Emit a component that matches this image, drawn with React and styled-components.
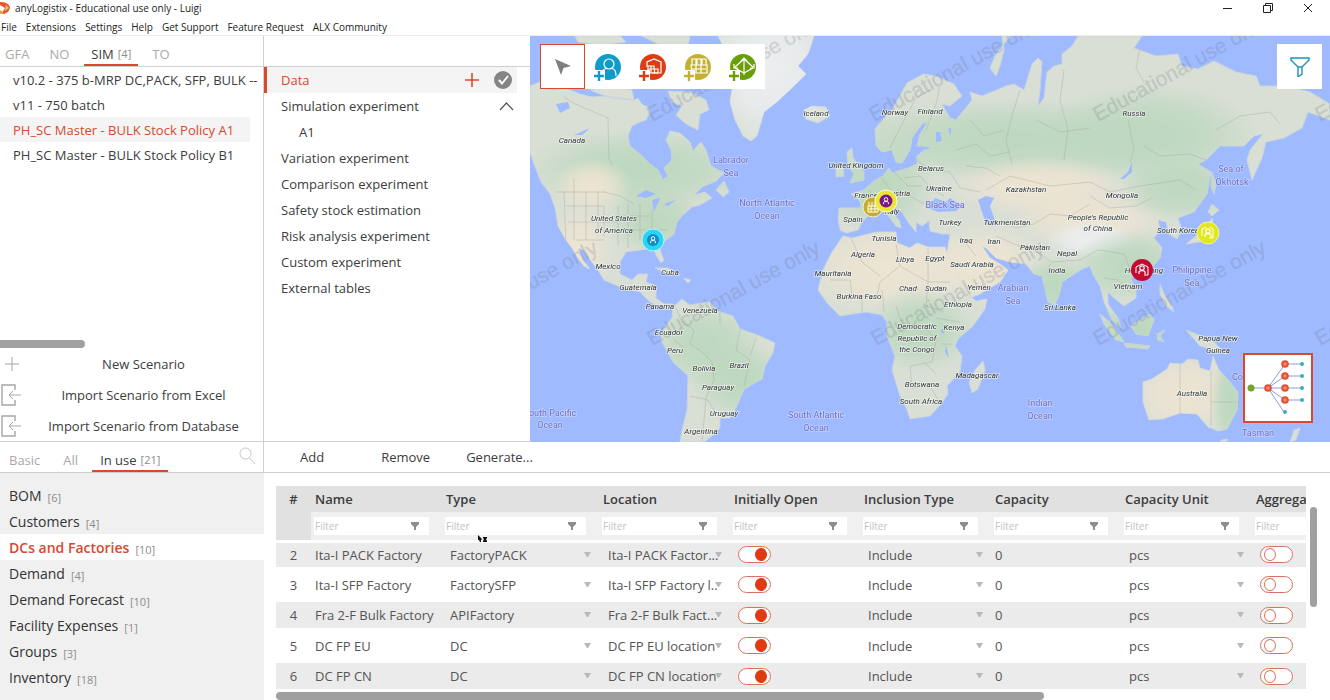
import React from "react";
import styled, { createGlobalStyle } from "styled-components";

const GlobalStyle = createGlobalStyle`
  :root {
    --accent: #d9482f;
    --text: #3c3c3c;
    --muted: #a9a9a9;
    --line: #cfcfcf;
    --panel: #f0f0f0;
    --thumb: #a0a0a0;
  }
  * {
    box-sizing: border-box;
  }
  body {
    margin: 0;
    background: #fff;
    color: var(--text);
    font-family: "Open Sans", "Noto Sans", sans-serif;
    font-size: 13px;
  }
  button,
  input,
  select {
    font: inherit;
    color: inherit;
    border: 0;
    padding: 0;
    margin: 0;
    background: none;
  }
`;

const Page = styled.div`
  display: flex;
  flex-direction: column;
  height: 100vh;
  overflow: hidden;
`;

const TitleBar = styled.header`
  display: flex;
  align-items: center;
  flex: 0 0 16px;
  gap: 5px;
  padding-right: 2px;
  font-size: 10px;
`;

const TitleText = styled.h1`
  flex: 1;
  margin: 0;
  font-size: 10px;
  font-weight: 400;
  color: #222;
`;

const WindowButtons = styled.div`
  display: flex;
`;

const WindowButton = styled.button`
  display: flex;
  align-items: center;
  justify-content: center;
  width: 40px;
  height: 16px;
`;

const MenuBar = styled.nav`
  display: flex;
  align-items: center;
  flex: 0 0 20px;
  gap: 9px;
  padding: 2px 0 0 1px;
  border-bottom: 1px solid #ececec;
`;

const MenuItem = styled.button`
  font-size: 10px;
  color: #222;
`;

const Workspace = styled.main`
  display: grid;
  grid-template-columns: 264px 266px 1fr;
  flex: 1;
  min-height: 0;
`;

const SidePanel = styled.section`
  display: flex;
  flex-direction: column;
  min-width: 0;
  border-right: ${(props) => (props.$divided ? "1px solid var(--line)" : "0")};
  border-bottom: 1px solid var(--line);
`;

const Tabs = styled.div`
  display: flex;
  align-items: stretch;
  flex: 0 0 31px;
  border-bottom: 1px solid var(--line);
`;

const Tab = styled.button`
  display: flex;
  align-items: center;
  gap: 4px;
  padding: 7px ${(props) => props.$pad}px 0;
  color: ${(props) => (props.$active ? "var(--text)" : "var(--muted)")};
  border-bottom: 2px solid
    ${(props) => (props.$active ? "var(--accent)" : "transparent")};
`;

const Count = styled.span`
  font-size: 11px;
  color: #8c8c8c;
`;

const ScenarioList = styled.ul`
  flex: 1;
  margin: 0;
  padding: 0;
  list-style: none;
`;

const Scenario = styled.li`
  height: 25px;
  margin-right: 13px;
  padding-left: 13px;
  line-height: 26px;
  white-space: nowrap;
  color: ${(props) => (props.$selected ? "var(--accent)" : "inherit")};
  background: ${(props) => (props.$selected ? "#f4f4f4" : "none")};
`;

const ListThumb = styled.div`
  width: 85px;
  height: 8px;
  border-radius: 0 4px 4px 0;
  background: var(--thumb);
`;

const ImportButton = styled.button`
  display: grid;
  grid-template-columns: 24px 1fr;
  align-items: center;
  height: 31px;
`;

const Experiment = styled.div`
  display: flex;
  align-items: center;
  height: 26px;
  margin-right: 13px;
  padding-left: ${(props) => (props.$nested ? 35 : props.$selected ? 14 : 17)}px;
  padding-right: ${(props) => (props.$selected ? 5 : 3)}px;
  color: ${(props) => (props.$selected ? "var(--accent)" : "inherit")};
  background: ${(props) => (props.$selected ? "#f4f4f4" : "none")};
  border-left: ${(props) => (props.$selected ? "3px solid var(--accent)" : "0")};
`;

const ExperimentName = styled.span`
  flex: 1;
`;

const IconButton = styled.button`
  display: flex;
  margin-left: 14px;
`;

const MapPane = styled.section`
  position: relative;
  overflow: hidden;
  background: #9fbafe;
`;

const MapSvg = styled.svg`
  display: block;
  width: 100%;
  height: 100%;
`;

const MapTools = styled.div`
  position: absolute;
  top: 8px;
  left: 10px;
  display: flex;
  background: #fff;
`;

const MapTool = styled.button`
  display: flex;
  align-items: center;
  justify-content: center;
  width: 45px;
  height: 45px;
  background: #fff;
  border: 1px solid ${(props) => (props.$active ? "var(--accent)" : "#fff")};
`;

const MapFilter = styled(MapTool)`
  position: absolute;
  top: 8px;
  right: 8px;
`;

const MiniMap = styled.button`
  position: absolute;
  right: 17px;
  bottom: 19px;
  width: 70px;
  height: 70px;
  background: #fff;
  border: 2px solid var(--accent);
`;

const Bottom = styled.div`
  display: grid;
  grid-template-columns: 264px 1fr;
  flex: 0 0 257px;
`;

const TablesPane = styled.section`
  display: flex;
  flex-direction: column;
  min-height: 0;
  overflow: hidden;
`;

const TabSpacer = styled.div`
  flex: 1;
  display: flex;
  justify-content: flex-end;
  padding: 5px 7px 0 0;
  border-right: 1px solid var(--line);
`;

const TableNames = styled.ul`
  flex: 1;
  margin: 0;
  padding: 9px 0 0;
  list-style: none;
  background: var(--panel);
`;

const TableName = styled.li`
  display: flex;
  align-items: center;
  gap: 6px;
  height: 26px;
  padding-left: 9px;
  font-size: 14px;
  font-weight: ${(props) => (props.$selected ? 600 : 400)};
  color: ${(props) => (props.$selected ? "var(--accent)" : "#333")};
  background: ${(props) => (props.$selected ? "#fff" : "none")};

  ${Count} {
    padding-top: 4px;
    font-weight: 400;
  }
`;

const DataPane = styled.section`
  position: relative;
  display: flex;
  flex-direction: column;
  min-width: 0;
`;

const Actions = styled.div`
  display: flex;
  align-items: center;
  flex: 0 0 31px;
  padding-left: 36px;
  border-bottom: 1px solid var(--line);
`;

const Action = styled.button`
  margin-right: ${(props) => props.$gap || 0}px;
`;

const GridArea = styled.div`
  display: grid;
  grid-template-columns: 1fr 7px;
  gap: 4px;
  margin: 13px 13px 0 12px;
  min-width: 0;
`;

const GridClip = styled.div`
  min-width: 0;
  overflow: hidden;
`;

const VerticalThumb = styled.div`
  height: 100px;
  margin-top: 21px;
  border-radius: 4px;
  background: var(--thumb);
`;

const HorizontalThumb = styled.div`
  width: 72%;
  height: 8px;
  margin: 3px 0 0 12px;
  border-radius: 4px;
  background: var(--thumb);
`;

const Table = styled.table`
  width: 1106px;
  table-layout: fixed;
  border-collapse: collapse;
`;

const HeadCell = styled.th`
  height: 26px;
  padding: 0 0 0 ${(props) => (props.$number ? 0 : 4)}px;
  font-weight: 600;
  text-align: ${(props) => (props.$number ? "center" : "left")};
  background: #e1e1e1;
`;

const FilterCell = styled.td`
  height: 29px;
  padding: 0 13px 0 3px;
  background: ${(props) => (props.$number ? "#e1e1e1" : "#f0f0f0")};
  border-bottom: 3px solid #fff;
`;

const FilterBox = styled.label`
  display: flex;
  align-items: center;
  height: 18px;
  padding-right: 9px;
  background: #fff;
`;

const FilterInput = styled.input`
  flex: 1;
  width: 0;
  min-width: 0;
  padding-left: 1px;
  font-size: 10px;

  &::placeholder {
    color: #c2c2c2;
    opacity: 1;
  }
`;

const Row = styled.tr`
  height: ${(props) => (props.$shaded ? 26 : 35)}px;
  background: ${(props) => (props.$shaded ? "#ebebeb" : "#fff")};
`;

const Cell = styled.td`
  padding: 0 0 0 ${(props) => (props.$number ? 0 : props.$pad || 4)}px;
  white-space: nowrap;
  color: #555;
  text-align: ${(props) => (props.$number ? "center" : "left")};
`;

const SelectBox = styled.div`
  display: flex;
  align-items: center;
  padding-right: 7px;

  svg {
    flex: none;
    margin-left: -6px;
  }
`;

const Select = styled.select`
  flex: 1;
  min-width: 0;
  padding-left: 1px;
  appearance: none;
`;

const Toggle = styled.input`
  appearance: none;
  display: flex;
  align-items: center;
  justify-content: flex-start;
  width: 33px;
  height: 17px;
  padding: 0 3px;
  border: 1px solid #dd705c;
  border-radius: 9px;
  background: #fff;

  &::before {
    content: "";
    width: 10px;
    height: 11px;
    border: 1px solid #dd705c;
    border-radius: 50%;
  }
  &:checked {
    justify-content: flex-end;
  }
  &:checked::before {
    border-color: #e03a12;
    background: #e03a12;
  }
`;

const BusyCursor = styled.svg`
  position: absolute;
  left: 213px;
  top: 93px;
`;

const scenarios = [
  "v10.2 - 375 b-MRP DC,PACK, SFP, BULK --",
  "v11 - 750 batch",
  "PH_SC Master - BULK Stock Policy A1",
  "PH_SC Master - BULK Stock Policy B1",
];

const experiments = [
  "Variation experiment",
  "Comparison experiment",
  "Safety stock estimation",
  "Risk analysis experiment",
  "Custom experiment",
  "External tables",
];

const tables = [
  ["BOM", 6],
  ["Customers", 4],
  ["DCs and Factories", 10],
  ["Demand", 4],
  ["Demand Forecast", 10],
  ["Facility Expenses", 1],
  ["Groups", 3],
  ["Inventory", 18],
];

const columns = [
  ["Name", 131],
  ["Type", 157],
  ["Location", 131],
  ["Initially Open", 130],
  ["Inclusion Type", 131],
  ["Capacity", 130],
  ["Capacity Unit", 131],
  ["Aggregate", 130],
];

const rows = [
  [2, "Ita-I PACK Factory", "FactoryPACK", "Ita-I PACK Factor..."],
  [3, "Ita-I SFP Factory", "FactorySFP", "Ita-I SFP Factory l.."],
  [4, "Fra 2-F Bulk Factory", "APIFactory", "Fra 2-F Bulk Fact..."],
  [5, "DC FP EU", "DC", "DC FP EU location"],
  [6, "DC FP CN", "DC", "DC FP CN location"],
];

// map coordinates: x 530-1330, y 36-442
const land = [
  // north america
  "M530 86L540 82 552 90 566 88 580 94 592 97 606 96 620 98 634 100 644 96 648 90 652 96 646 104 650 112 646 120 640 122 632 126 628 136 630 146 642 156 650 164 658 170 663 180 668 176 664 168 672 160 671 150 666 140 670 131 680 133 690 142 693 151 701 142 706 150 711 166 724 173 716 181 702 187 694 195 705 192 712 198 700 205 692 207 682 216 677 222 674 234 662 243 660 250 664 260 661 263 656 255 654 248 640 250 626 252 620 262 620 274 632 280 638 274 648 274 646 282 656 286 656 298 664 304 672 304 673 309 664 308 650 302 640 292 620 287 604 280 598 270 592 262 584 250 578 248 584 262 590 269 584 266 578 258 572 248 566 240 558 226 555 208 550 194 541 182 534 164 530 152Z",
  // islands of the arctic, baffin
  "M575 36L620 36 626 42 600 45 578 42Z",
  "M642 36L690 36 688 46 662 46Z",
  "M668 91L690 92 706 100 709 110 700 114 698 130 686 124 676 115 682 106 672 102Z",
  "M590 90L612 86 632 90 634 100 610 98Z",
  // greenland
  "M718 36L814 36 808 54 798 66 806 74 796 84 778 101 764 112 757 136 751 141 743 136 735 120 730 102 732 89 742 85 735 60 724 48Z",
  "M804 110L812 106 826 107 830 116 818 123 806 119Z",
  "M716 190L724 181 729 192 723 197Z",
  "M655 268L668 268 680 275 670 274Z",
  "M683 278L691 280 688 283Z",
  // south america
  "M673 307L682 299 690 305 710 302 717 311 733 316 740 329 760 336 775 343 773 353 765 366 762 379 744 389 737 406 730 418 720 418 720 428 712 436 704 442 680 442 682 430 687 410 688 376 673 362 661 340 663 330 672 318Z",
  // africa
  "M843 236L852 238 876 232 896 232 897 243 910 248 917 243 928 247 945 247 948 256 957 272 963 285 972 298 976 301 987 299 985 309 973 326 958 339 955 346 962 356 960 372 947 386 948 394 941 404 930 416 910 419 907 410 900 396 892 370 895 356 887 336 887 322 882 315 866 312 840 316 827 303 818 290 823 270 832 252Z",
  "M983 361L985 370 978 389 972 393 969 382 975 370Z",
  // europe and asia
  "M839 208L861 208 860 201 851 194 864 190 874 181 883 176 889 168 892 173 908 168 917 164 917 156 924 150 934 148 924 146 917 146 920 134 928 122 922 124 912 138 910 150 902 163 896 162 892 150 882 152 876 146 875 129 893 108 907 83 923 74 936 76 954 84 962 96 950 106 942 104 950 118 956 120 964 110 972 100 970 92 982 96 1006 86 1014 84 1024 90 1032 64 1038 58 1042 62 1040 90 1038 106 1044 98 1047 72 1054 66 1062 64 1062 54 1072 46 1078 36 1142 36 1134 48 1156 56 1178 54 1182 66 1198 69 1214 61 1236 72 1256 76 1260 86 1286 86 1310 92 1330 104 1330 120 1308 112 1302 128 1284 138 1266 142 1262 158 1252 180 1247 160 1250 150 1263 134 1254 136 1244 146 1220 146 1206 160 1198 164 1211 172 1207 194 1194 212 1178 218 1182 230 1177 239 1169 234 1166 222 1158 220 1160 230 1154 238 1162 248 1160 258 1150 270 1138 276 1130 278 1136 288 1136 298 1124 306 1114 298 1108 292 1108 304 1118 318 1121 328 1112 320 1104 302 1100 286 1094 276 1090 266 1082 269 1062 282 1060 292 1055 305 1048 302 1042 276 1034 274 1026 264 1010 262 996 258 986 248 982 246 990 258 1000 264 1008 270 1000 282 980 294 970 298 962 286 953 266 947 254 950 234 942 234 930 231 929 221 922 226 916 222 916 232 908 222 902 212 895 207 890 210 899 220 901 228 896 226 884 210 870 214 862 222 858 230 846 233 840 230 838 218Z",
  "M847 152L852 148 853 158 864 172 864 180 850 183 854 174 848 166Z",
  "M836 168L843 166 844 176 836 177Z",
  "M1010 36L995 56 990 68 996 76 1000 66 1004 50 1002 36Z",
  "M1212 172L1216 184 1214 194 1211 186Z",
  "M1208 212L1212 204 1219 210 1212 216ZM1212 218L1214 234 1200 242 1186 244 1196 236 1206 228Z",
  "M1100 314L1112 324 1124 342 1116 340 1104 324Z",
  "M1124 343L1150 346 1148 349 1126 347Z",
  "M1131 326L1150 314 1154 320 1148 336 1136 334Z",
  "M1157 334L1165 330 1160 336 1164 342 1158 340Z",
  "M1160 284L1164 294 1172 306 1174 312 1166 306 1160 294Z",
  "M1186 330L1196 334 1212 340 1226 354 1214 350 1200 346Z",
  // australia, new zealand
  "M1143 382L1152 379 1167 369 1170 363 1182 364 1188 359 1198 360 1200 368 1210 371 1213 356 1219 370 1230 382 1238 393 1237 410 1227 429 1218 431 1208 427 1197 414 1180 413 1163 419 1149 420 1143 402Z",
  "M1294 430L1300 428 1296 440 1290 442Z",
  "M1222 440L1228 439 1226 442 1220 442Z",
].join("");

const water = [
  "M928 208L935 198 946 202 950 198 962 206 956 211 938 212Z",
  "M978 200L986 196 994 198 990 206 994 218 996 226 986 224 982 212Z",
  "M1120 179L1128 172 1132 162 1132 172 1124 179Z",
  "M636 196L646 190 656 194 646 198ZM652 200L660 198 654 212ZM664 204L676 200 668 206Z",
  "M556 104L568 102 570 108 560 113ZM574 135L590 128 582 135Z",
  "M634 92L650 86 660 98 654 110 642 104Z",
  "M936 132L940 132 942 141 936 142ZM948 129L951 128 951 136Z",
  "M940 331L945 328 944 334ZM946 345L949 358 945 352Z",
];

const tints = [
  ["green", 640, 170, 120, 42],
  ["green", 655, 220, 50, 34],
  ["sand", 592, 186, 40, 28],
  ["sand", 580, 250, 34, 44],
  ["green", 706, 345, 56, 42],
  ["green", 740, 380, 50, 40],
  ["snow", 770, 70, 70, 80],
  ["sand", 890, 268, 90, 48],
  ["green", 920, 330, 56, 44],
  ["sand", 985, 264, 60, 40],
  ["green", 880, 186, 56, 50],
  ["green", 1010, 140, 190, 42],
  ["green", 1150, 135, 110, 52],
  ["sand", 1040, 186, 90, 30],
  ["sand", 1090, 220, 80, 28],
  ["snow", 1090, 240, 46, 20],
  ["green", 1130, 266, 60, 36],
  ["green", 1180, 188, 60, 34],
  ["green", 1054, 286, 40, 30],
  ["green", 1140, 330, 60, 30],
  ["sand", 1186, 394, 58, 40],
  ["green", 1230, 400, 20, 50],
];

const borders = [
  "M564 96Q566 100 580 106L608 118 609 158 612 165M556 192H606M564 192L566 246M574 178V240M586 192V240M598 192V232M604 192L620 196 634 204M566 206H604M568 222H618M576 240H604M604 206V236M618 206V246M628 204V248M640 204V240M652 210V240M618 216H650M620 230H668",
  "M676 308L682 322 694 330 690 344 700 350 712 362 714 380 706 398 702 442M720 312V324M740 330L736 350 750 360 744 386M756 338L750 356M690 396L708 400 716 414M674 340L684 348",
  "M850 236L862 262 880 276M896 244L900 266 880 282 876 300M928 248V282L950 282M900 266L928 282 926 306 944 312M830 280L850 280 852 296M862 296L862 312M882 290L884 312M896 306L904 330 924 326 936 340 932 362 910 366M936 318L960 322M942 344L952 344M910 366L912 388 930 386 938 400M924 362L936 374",
  "M868 190L878 200 886 204M882 178L892 192 902 190M892 170L908 186 922 186M904 178L920 176 930 188 944 196M910 196L924 204M916 160L930 170 950 172 960 188 980 192M890 148L900 128 916 98 930 90M926 130L936 104 940 86",
  "M986 190L1010 176 1050 186 1090 182 1110 192 1140 186 1180 180 1196 190M1000 220L1016 228 1034 224 1050 214 1070 216 1090 204M1090 196L1110 208 1136 206 1152 198M996 236L1014 244 1034 250 1052 262 1080 260 1098 250 1124 254 1132 274M960 236L976 256M1104 278L1118 280 1130 292M1050 264L1048 274 1062 272",
  "M1020 90L1012 116 1006 140 1012 164M1064 70L1060 100 1068 130 1064 160M1140 48L1136 68 1144 82M1128 120L1134 150 1130 162M1206 160L1190 154 1160 156 1144 146M1216 130L1240 116 1270 112 1280 124M970 120L984 136 1004 130M956 150L976 144 990 156 1010 152M966 166L986 168 1000 176M1036 120L1060 132 1090 128",
  "M1180 364V413M1211 371V426M1211 402H1238",
];

const places = [
  [816, 116, "Iceland"], [895, 115, "Norway"], [930, 114, "Finland"],
  [1134, 116, "Russia"], [572, 143, "Canada"], [856, 168, "United Kingdom"],
  [931, 171, "Belarus"], [939, 191, "Ukraine"], [1026, 192, "Kazakhstan"],
  [1122, 198, "Mongolia"], [866, 198, "France"], [898, 196, "Austria"],
  [614, 221, "United States"], [614, 233, "of America"], [853, 222, "Spain"],
  [892, 214, "Italy"], [950, 225, "Turkey"], [1007, 225, "Turkmenistan"],
  [1098, 220, "People's Republic"], [1098, 231, "of China"],
  [1178, 233, "South Korea"], [884, 241, "Tunisia"], [966, 243, "Iraq"],
  [994, 244, "Iran"], [1035, 250, "Pakistan"], [1067, 256, "Nepal"],
  [863, 257, "Algeria"], [905, 262, "Libya"], [935, 261, "Egypt"],
  [972, 267, "Saudi Arabia"], [608, 269, "Mexico"], [670, 275, "Cuba"],
  [1057, 273, "India"], [1144, 273, "Hong Kong"], [833, 276, "Mauritania"],
  [638, 290, "Guatemala"], [908, 291, "Chad"], [936, 291, "Sudan"],
  [979, 290, "Yemen"], [1128, 289, "Vietnam"], [859, 299, "Burkina Faso"],
  [958, 307, "Ethiopia"], [660, 309, "Panama"], [700, 313, "Venezuela"],
  [1060, 310, "Sri Lanka"], [917, 329, "Democratic"], [954, 330, "Kenya"],
  [917, 341, "Republic of"], [917, 352, "the Congo"], [669, 335, "Ecuador"],
  [675, 353, "Peru"], [1218, 341, "Papua New"], [1218, 353, "Guinea"],
  [704, 371, "Bolivia"], [739, 368, "Brazil"], [977, 378, "Madagascar"],
  [922, 387, "Botswana"], [718, 390, "Paraguay"], [921, 404, "South Africa"],
  [1192, 396, "Australia"], [724, 416, "Uruguay"], [701, 434, "Argentina"],
];

const seas = [
  [731, 163, "Labrador"], [731, 176, "Sea"], [767, 206, "North Atlantic"],
  [767, 219, "Ocean"], [945, 208, "Black Sea"], [1231, 172, "Sea of"],
  [1232, 185, "Okhotsk"], [1013, 291, "Arabian"], [1013, 304, "Sea"],
  [1192, 273, "Philippine"], [1192, 286, "Sea"], [550, 416, "South Pacific"],
  [550, 428, "Ocean"], [816, 418, "South Atlantic"], [816, 431, "Ocean"],
  [1040, 406, "Indian"], [1040, 419, "Ocean"], [1251, 380, "Coral Sea"],
  [1258, 436, "Tasman"],
];

const watermarks = [
  [652, 122], [874, 122], [1098, 122], [1320, 122],
  [430, 346], [652, 346], [876, 346], [1098, 346], [1320, 346],
];

const PersonGlyph = () => (
  <g fill="none" stroke="#fff" strokeWidth="1.2">
    <circle cx="0" cy="-2" r="2.2" />
    <path d="M-3 4V2Q-3 .6 0 .6T3 2V4" />
  </g>
);

const WorldMap = () => (
  <MapSvg
    viewBox="530 36 800 406"
    preserveAspectRatio="xMidYMid slice"
    role="img"
    aria-label="World map"
  >
    <defs>
      <clipPath id="land">
        <path d={land} />
      </clipPath>
      {[
        ["green", "#bcd8be"],
        ["sand", "#eee4d2"],
        ["snow", "#eceef1"],
      ].map(([id, color]) => (
        <radialGradient id={id} key={id}>
          <stop offset="0" stopColor={color} />
          <stop offset="0.5" stopColor={color} stopOpacity="0.75" />
          <stop offset="1" stopColor={color} stopOpacity="0" />
        </radialGradient>
      ))}
    </defs>
    <rect x="530" y="36" width="800" height="406" fill="#9fbafe" />
    <path d={land} fill="#d9dfd5" stroke="#c9d5de" strokeWidth="1" />
    <g clipPath="url(#land)">
      {tints.map(([tint, cx, cy, rx, ry]) => (
        <ellipse
          key={`${cx}-${cy}`}
          cx={cx}
          cy={cy}
          rx={rx}
          ry={ry}
          fill={`url(#${tint})`}
        />
      ))}
      <path
        d={borders.join("")}
        fill="none"
        stroke="#a9a9a2"
        strokeWidth="0.6"
        opacity="0.7"
      />
    </g>
    <path d={water.join("")} fill="#9fbafe" />

    <g
      fontFamily="'Liberation Sans', sans-serif"
      fontSize="21"
      fill="#6f7783"
      stroke="#6f7783"
      strokeWidth="0.4"
      opacity="0.22"
    >
      {watermarks.map(([x, y]) => (
        <text key={`${x}-${y}`} transform={`translate(${x} ${y}) rotate(-29)`}>
          Educational use only
        </text>
      ))}
    </g>

    <g
      fontFamily="Roboto, sans-serif"
      fontSize="8"
      fontStyle="italic"
      textAnchor="middle"
      fill="#2f3336"
      stroke="#f4f6f4"
      strokeWidth="1.6"
      strokeOpacity="0.7"
      paintOrder="stroke"
    >
      {places.map(([x, y, name]) => (
        <text key={name} x={x} y={y}>
          {name}
        </text>
      ))}
    </g>
    <g
      fontFamily="Roboto, sans-serif"
      fontSize="9"
      textAnchor="middle"
      fill="#6a6fc4"
      stroke="#d5ddff"
      strokeWidth="1.4"
      strokeOpacity="0.7"
      paintOrder="stroke"
    >
      {seas.map(([x, y, name]) => (
        <text key={`${x}-${y}`} x={x} y={y}>
          {name}
        </text>
      ))}
    </g>

    <g transform="translate(873 207)">
      <circle r="10" fill="#c4ae2c" stroke="#f3efc8" strokeWidth="1" />
      <path
        d="M-5 5V-1H5V5ZM-4 -1V-5M-1 -1V-5M2 -1V-5M-5 2H5M-2 -1V5M2 -1V5"
        fill="none"
        stroke="#fff"
      />
    </g>
    <g transform="translate(886 201)">
      <circle r="11" fill="#e9e72f" stroke="#fbfbd8" strokeWidth="1" />
      <circle r="6.5" fill="#7d1687" />
      <g transform="scale(.8)">
        <PersonGlyph />
      </g>
    </g>
    <g transform="translate(653 240)">
      <circle r="11" fill="#2bd4f4" stroke="#bdf2fb" strokeWidth="1" />
      <circle r="6" fill="#0f8fc0" />
      <g transform="scale(.8)">
        <PersonGlyph />
      </g>
    </g>
    <g transform="translate(1208 233)">
      <circle r="11" fill="#e3e81c" stroke="#f2f3a8" strokeWidth="1" />
      <PersonGlyph />
      <path d="M-6 3V-4L-2 -6M2 -6L5 -4V5H1" fill="none" stroke="#fff" />
    </g>
    <g transform="translate(1142 270)">
      <circle r="11" fill="#c20b31" />
      <PersonGlyph />
      <path
        d="M-6 3V-3L0 -6 6 -3V5H2"
        fill="none"
        stroke="#fff"
        strokeWidth="1"
      />
    </g>
  </MapSvg>
);

const toolIcons = [
  [
    "Add customer",
    "#0f9cca",
    <React.Fragment key="i">
      <circle cx="15" cy="11" r="5" />
      <path d="M8 23Q8 16 12 15.500M18 15.500Q22 16 22 23" />
    </React.Fragment>,
  ],
  [
    "Add warehouse",
    "#dd3c14",
    <React.Fragment key="i">
      <path d="M8 14V9L15 6 22 9V20H13" />
      <path d="M9 13H15V16H9ZM12 13V20M15 16H19V20M15.500 16V20M9 16V20H19" />
    </React.Fragment>,
  ],
  [
    "Add factory",
    "#c5b12f",
    <React.Fragment key="i">
      <path d="M8 12V6H12V12M13 12V6H17V12M18 12V6H22V12M7 12H23V20H8ZM8 16H22M12 12V20M17 12V20" />
    </React.Fragment>,
  ],
  [
    "Add supplier",
    "#6a9e0a",
    <React.Fragment key="i">
      <path d="M15 5V22M12 8L15 5 18 8M15 6L6 14M15 6L24 14M5 11V15H9M25 11V15H21M6 15L15 20 24 15" />
    </React.Fragment>,
  ],
];

const ToolIcon = ({ color, children }) => (
  <svg width="28" height="28" viewBox="0 0 28 28">
    <circle cx="14" cy="14" r="13" fill={color} />
    <g fill="none" stroke="#fff" strokeWidth="1.2">
      {children}
    </g>
    <path d="M0 17H11V28H0Z" fill="#fff" />
    <path d="M5 18V28M0 23H10" stroke={color} strokeWidth="2.4" />
  </svg>
);

const Funnel = () => (
  <svg width="10" height="10" viewBox="0 0 10 10">
    <path d="M1 1H9V3L6 6V9H4V6L1 3Z" fill="#8d8d8d" />
  </svg>
);

const DropArrow = () => (
  <svg width="9" height="8" viewBox="0 0 9 8">
    <path d="M1 1H8L5 6H4Z" fill="#b9b9b9" />
  </svg>
);

const ImportIcon = () => (
  <svg width="22" height="22" viewBox="0 0 22 22" fill="none" stroke="#a6a6a6">
    <path d="M15 6V1H2V21H15V16" strokeWidth="1.4" />
    <path d="M21 11H9M13 7L9 11 13 15" />
  </svg>
);

const Dropdown = ({ label, value }) => (
  <SelectBox>
    <Select aria-label={label} defaultValue={value}>
      <option>{value}</option>
    </Select>
    <DropArrow />
  </SelectBox>
);

const Network = () => (
  <svg width="66" height="66" viewBox="0 0 66 66">
    <g stroke="#8f9bd6" fill="none">
      <path d="M6 33H57M23 33L40 9H57M23 33L40 21H57M23 33L40 45H57M23 33L39 57" />
    </g>
    <circle cx="6" cy="33" r="3.5" fill="#76a32a" />
    {[
      [23, 33],
      [40, 9],
      [40, 21],
      [40, 33],
      [40, 45],
    ].map(([x, y]) => (
      <g key={`${x}-${y}`}>
        <circle cx={x} cy={y} r="3.8" fill="#e4502e" />
        <path
          d={`M${x - 1} ${y + 1}v-2h2v2z`}
          fill="none"
          stroke="#f7b9a8"
          strokeWidth="0.7"
        />
      </g>
    ))}
    {[9, 21, 33, 45].map((y) => (
      <circle key={y} cx="57" cy={y} r="2" fill="#3fa9c4" />
    ))}
    <circle cx="40" cy="57" r="2" fill="#3fa9c4" />
  </svg>
);

const App = () => {
  return (
    <Page>
      <GlobalStyle />
      <TitleBar>
        <svg width="10" height="12" viewBox="0 0 10 12">
          <path d="M0 0Q8 0 10 5Q10 10 4 12L0 11Z" fill="#e8562a" />
          <path d="M0 3L5 6 2 11 0 11Z" fill="#fff" />
          <path d="M6 3L9 6 5 9Z" fill="#f7c46a" />
          <path d="M0 8L3 10 1 12H0Z" fill="#e9a23a" />
        </svg>
        <TitleText>anyLogistix - Educational use only - Luigi</TitleText>
        <WindowButtons>
          <WindowButton aria-label="Minimize">
            <svg width="10" height="10" stroke="#222" fill="none">
              <path d="M0 5.500H9" />
            </svg>
          </WindowButton>
          <WindowButton aria-label="Restore">
            <svg width="10" height="10" stroke="#222" fill="none">
              <path d="M.5 2.500H7.500V9.500H.5ZM2.500 2.500V.5H9.500V7.500H7.500" />
            </svg>
          </WindowButton>
          <WindowButton aria-label="Close">
            <svg width="10" height="10" stroke="#222" fill="none">
              <path d="M1 1L9 9M9 1L1 9" />
            </svg>
          </WindowButton>
        </WindowButtons>
      </TitleBar>
      <MenuBar>
        {[
          "File",
          "Extensions",
          "Settings",
          "Help",
          "Get Support",
          "Feature Request",
          "ALX Community",
        ].map((item) => (
          <MenuItem key={item}>{item}</MenuItem>
        ))}
      </MenuBar>

      <Workspace>
        <SidePanel $divided>
          <Tabs>
            <Tab $pad={5}>GFA</Tab>
            <Tab $pad={15}>NO</Tab>
            <Tab $pad={7} $active>
              SIM <Count>[4]</Count>
            </Tab>
            <Tab $pad={14}>TO</Tab>
          </Tabs>
          <ScenarioList>
            {scenarios.map((name, i) => (
              <Scenario key={name} $selected={i === 2}>
                {name}
              </Scenario>
            ))}
          </ScenarioList>
          <ListThumb />
          <ImportButton>
            <svg width="24" height="14" viewBox="0 0 24 14" stroke="#a6a6a6">
              <path d="M12 0V14M5 7H19" />
            </svg>
            New Scenario
          </ImportButton>
          <ImportButton>
            <ImportIcon />
            Import Scenario from Excel
          </ImportButton>
          <ImportButton>
            <ImportIcon />
            Import Scenario from Database
          </ImportButton>
        </SidePanel>

        <SidePanel>
          <Tabs />
          <Experiment $selected>
            <ExperimentName>Data</ExperimentName>
            <IconButton aria-label="Add data">
              <svg width="16" height="16" viewBox="0 0 16 16">
                <path d="M8 1V15M1 8H15" stroke="#d9482f" strokeWidth="1.6" />
              </svg>
            </IconButton>
            <IconButton aria-label="Validate">
              <svg width="18" height="18" viewBox="0 0 18 18" fill="none">
                <circle cx="9" cy="9" r="9" fill="#858585" />
                <path d="M5 9L8 12.500 14 5" stroke="#fff" strokeWidth="2" />
              </svg>
            </IconButton>
          </Experiment>
          <Experiment>
            <ExperimentName>Simulation experiment</ExperimentName>
            <IconButton aria-label="Collapse">
              <svg width="15" height="9" viewBox="0 0 15 9" fill="none">
                <path d="M1 8L7.500 1 14 8" stroke="#555" strokeWidth="1.2" />
              </svg>
            </IconButton>
          </Experiment>
          <Experiment $nested>A1</Experiment>
          {experiments.map((name) => (
            <Experiment key={name}>{name}</Experiment>
          ))}
        </SidePanel>

        <MapPane>
          <WorldMap />
          <MapTools>
            <MapTool $active aria-label="Select">
              <svg width="18" height="18" viewBox="0 0 18 18">
                <path d="M1 1L17 8 9.500 10 7 17Z" fill="#7f7f7f" />
              </svg>
            </MapTool>
            {toolIcons.map(([label, color, icon]) => (
              <MapTool key={label} aria-label={label}>
                <ToolIcon color={color}>{icon}</ToolIcon>
              </MapTool>
            ))}
          </MapTools>
          <MapFilter aria-label="Filter map">
            <svg width="20" height="20" viewBox="0 0 20 20" fill="none">
              <path
                d="M1 1H19V3L12 10V17L8 20V10L1 3ZM8 10H12"
                stroke="#1693bd"
                strokeWidth="1.4"
              />
            </svg>
          </MapFilter>
          <MiniMap aria-label="Supply chain schema">
            <Network />
          </MiniMap>
        </MapPane>
      </Workspace>

      <Bottom>
        <TablesPane>
          <Tabs>
            <Tab $pad={9}>Basic</Tab>
            <Tab $pad={14}>All</Tab>
            <Tab $pad={8} $active>
              In use <Count>[21]</Count>
            </Tab>
            <TabSpacer>
              <svg width="17" height="18" viewBox="0 0 17 18" fill="none">
                <circle cx="6.500" cy="6.500" r="5.500" stroke="#c4c4c4" />
                <path d="M10.500 11L16 17" stroke="#c4c4c4" />
              </svg>
            </TabSpacer>
          </Tabs>
          <TableNames>
            {tables.map(([name, count], i) => (
              <TableName key={name} $selected={i === 2}>
                {name} <Count>[{count}]</Count>
              </TableName>
            ))}
          </TableNames>
        </TablesPane>

        <DataPane>
          <Actions>
            <Action $gap={57}>Add</Action>
            <Action $gap={36}>Remove</Action>
            <Action>Generate...</Action>
          </Actions>
          <GridArea>
            <GridClip>
              <Table>
                <colgroup>
                  <col width="35" />
                  {columns.map(([name, width]) => (
                    <col key={name} width={width} />
                  ))}
                </colgroup>
                <thead>
                  <tr>
                    <HeadCell $number>#</HeadCell>
                    {columns.map(([name]) => (
                      <HeadCell key={name}>{name}</HeadCell>
                    ))}
                  </tr>
                  <tr>
                    <FilterCell $number />
                    {columns.map(([name]) => (
                      <FilterCell key={name}>
                        <FilterBox>
                          <FilterInput
                            placeholder="Filter"
                            aria-label={`Filter ${name}`}
                          />
                          <Funnel />
                        </FilterBox>
                      </FilterCell>
                    ))}
                  </tr>
                </thead>
                <tbody>
                  {rows.map(([id, name, type, location]) => (
                    <Row key={id} $shaded={id % 2 === 0}>
                      <Cell $number>{id}</Cell>
                      <Cell>{name}</Cell>
                      <Cell $pad={7}>
                        <Dropdown label="Type" value={type} />
                      </Cell>
                      <Cell $pad={8}>
                        <Dropdown label="Location" value={location} />
                      </Cell>
                      <Cell $pad={8}>
                        <Toggle
                          type="checkbox"
                          aria-label="Initially Open"
                          defaultChecked
                        />
                      </Cell>
                      <Cell $pad={7}>
                        <Dropdown label="Inclusion Type" value="Include" />
                      </Cell>
                      <Cell>0</Cell>
                      <Cell $pad={7}>
                        <Dropdown label="Capacity Unit" value="pcs" />
                      </Cell>
                      <Cell $pad={8}>
                        <Toggle type="checkbox" aria-label="Aggregate" />
                      </Cell>
                    </Row>
                  ))}
                </tbody>
              </Table>
            </GridClip>
            <VerticalThumb />
          </GridArea>
          <HorizontalThumb />
          <BusyCursor width="12" height="9" viewBox="0 0 12 9">
            <path d="M1 0L5 4 4 5 4 7H3L2 5 1 5Z" fill="#111" />
            <path d="M6 2H10V3L9 4.500 10 6V7H6V6L7 4.500 6 3Z" fill="#111" />
          </BusyCursor>
        </DataPane>
      </Bottom>
    </Page>
  );
};

export default App;
